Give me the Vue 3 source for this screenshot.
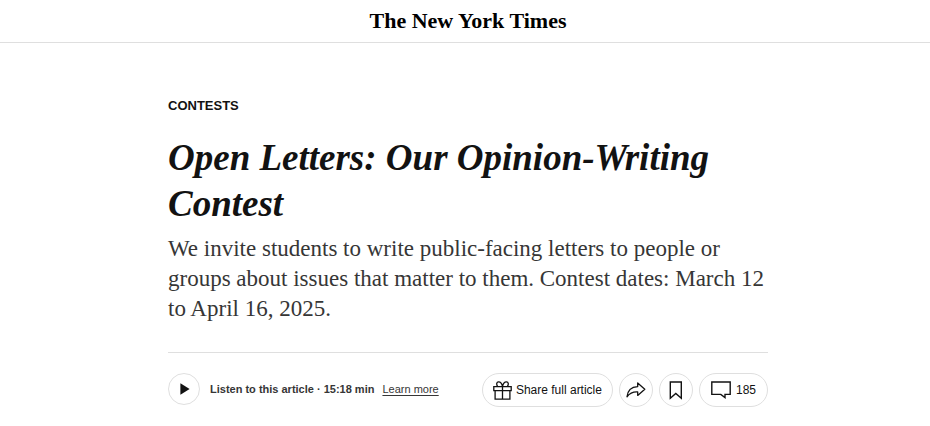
<script setup>
const title = 'Open Letters: Our Opinion-Writing Contest'
const summary =
  'We invite students to write public-facing letters to people or groups about issues that matter to them. Contest dates: March 12 to April 16, 2025.'
const duration = '15:18 min'
const commentCount = 185
</script>

<template>
  <div class="page">
    <header class="masthead">
      <a class="logo" href="#">The New York Times</a>
    </header>

    <main class="article">
      <a class="kicker" href="#">Contests</a>
      <h1 class="title">{{ title }}</h1>
      <p class="summary">{{ summary }}</p>

      <div class="toolbar">
        <div class="audio">
          <button class="pill round play" type="button" aria-label="Play">
            <svg width="12" height="12" viewBox="0 0 12 12">
              <path d="M2.4 0.3 11.6 6 2.4 11.7Z" fill="#121212" />
            </svg>
          </button>
          <span class="listen">Listen to this article · {{ duration }}</span>
          <a class="learn" href="#">Learn more</a>
        </div>

        <div class="actions">
          <button class="pill share" type="button">
            <svg width="19" height="19" viewBox="0 0 19 19" fill="none" stroke="#121212" stroke-width="1.3">
              <path d="M0.8 5.6H18.2V9.6H0.8ZM2.1 9.6V18.2H16.9V9.6M9.5 5.6V18.2" />
              <path d="M9.5 5.4C8.8 2.4 7.2 0.7 5.5 0.8 3.6 0.9 3.1 3.2 4.6 5.4M9.5 5.4C10.2 2.4 11.8 0.7 13.5 0.8 15.4 0.9 15.9 3.2 14.4 5.4" />
            </svg>
            <span>Share full article</span>
          </button>
          <button class="pill round" type="button" aria-label="Share">
            <svg width="20" height="16" viewBox="0 0 20 16" fill="none" stroke="#121212" stroke-width="1.3" stroke-linejoin="round">
              <path d="M11.7 1 18.8 7.2 11.7 13.4V9.9C6.9 9.6 3.6 11.2 1 14.8 1.6 8.7 5.3 4.9 11.7 4.6Z" />
            </svg>
          </button>
          <button class="pill round" type="button" aria-label="Save">
            <svg width="14" height="19" viewBox="0 0 14 19" fill="none" stroke="#121212" stroke-width="1.4">
              <path d="M1.3 1H12.3V17.2L6.8 12.4 1.3 17.2Z" />
            </svg>
          </button>
          <button class="pill comments" type="button" aria-label="Read comments">
            <svg width="20" height="18" viewBox="0 0 20 18" fill="none" stroke="#121212" stroke-width="1.4">
              <path d="M0.8 1H19.2V13.4H14V16.6L9.8 13.4H0.8Z" />
            </svg>
            <span>{{ commentCount }}</span>
          </button>
        </div>
      </div>
    </main>
  </div>
</template>

<style>
body {
  margin: 0;
  background: #fff;
}
</style>

<style scoped>
.page {
  color: #121212;
  font-family: "Liberation Sans", Arial, sans-serif;
}

.masthead {
  display: flex;
  align-items: center;
  justify-content: center;
  box-sizing: border-box;
  height: 43px;
  padding-left: 6px;
  border-bottom: 1px solid #dfdfdf;
}

.logo {
  color: #000;
  font: bold 22px/28px "Liberation Serif", "Times New Roman", serif;
  text-decoration: none;
  white-space: nowrap;
}

.article {
  max-width: 600px;
  margin: 0 auto;
  padding: 55px 16px 20px 22px;
}

.kicker {
  display: block;
  color: #121212;
  font-size: 13px;
  font-weight: bold;
  line-height: 16px;
  text-decoration: none;
  text-transform: uppercase;
}

.title {
  margin: 21px 0 0;
  font: italic bold 37px/46px "Liberation Serif", "Times New Roman", serif;
}

.summary {
  margin: 7px 0 0;
  color: #363636;
  font: 23px/30px "Liberation Serif", "Times New Roman", serif;
}

.toolbar {
  display: flex;
  align-items: flex-start;
  justify-content: space-between;
  flex-wrap: wrap;
  gap: 12px;
  margin-top: 28px;
  padding-top: 20px;
  border-top: 1px solid #dfdfdf;
}

.audio,
.actions {
  display: flex;
  align-items: center;
}

.audio {
  font-size: 11px;
}

.actions {
  gap: 6px;
}

.pill {
  display: inline-flex;
  align-items: center;
  justify-content: center;
  box-sizing: border-box;
  height: 34px;
  padding: 0 10px;
  border: 1px solid #dfdfdf;
  border-radius: 17px;
  background: #fff;
  color: #121212;
  font-family: inherit;
  font-size: 12px;
  cursor: pointer;
}

.pill svg {
  flex: none;
}

.round {
  width: 34px;
  padding: 0;
}

.play {
  width: 32px;
  height: 32px;
}

.share {
  gap: 4px;
}

.comments {
  gap: 5px;
  padding: 0 11px;
}

.listen {
  margin: 0 8px 0 10px;
  color: #363636;
  font-weight: bold;
}

.learn {
  color: #363636;
  text-underline-offset: 2px;
}
</style>
